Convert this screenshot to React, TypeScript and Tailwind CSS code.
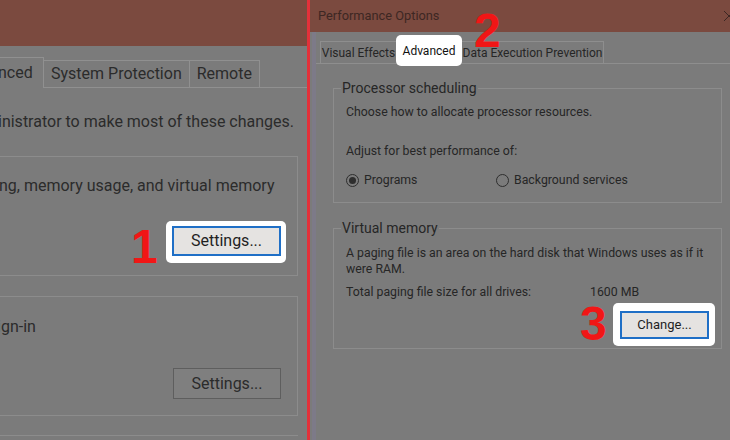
import React from 'react';

const font = { fontFamily: 'Roboto, "Noto Sans", sans-serif' };

const Mark = ({ n, className }: { n: string; className: string }) => (
    <span
        className={`absolute text-[48px] font-bold leading-none text-[#f11616] ${className}`}
        style={{ fontFamily: '"Liberation Sans", Arial, sans-serif' }}
    >
        {n}
    </span>
);

const Radio = ({ checked, label }: { checked?: boolean; label: string }) => (
    <label className="flex items-center gap-[5px]">
        <span className="flex h-[13px] w-[13px] items-center justify-center rounded-full border border-[#2e2e2e]">
            {checked && <span className="h-[7px] w-[7px] rounded-full bg-[#2e2e2e]" />}
        </span>
        {label}
    </label>
);

const LeftPanel = () => {
    return (
        <div className="flex w-[307px] shrink-0 flex-col overflow-hidden whitespace-nowrap text-[16px] text-[#2b2b2b]">
            <div className="h-[46px] bg-[#7b4a3f]" />

            {/* tabs */}
            <div className="flex h-[42px] items-end">
                <div className="-ml-[4px] flex h-[31px] w-[48px] items-center border-r border-t border-[#909090] pl-[4px]">
                    <span className="-ml-[2px]">nced</span>
                </div>
                <div className="flex flex-1 items-end border-b border-[#909090]">
                    <div className="flex h-[27px] items-center border-r border-t border-[#909090] px-[7px]">System Protection</div>
                    <div className="flex h-[27px] items-center border-r border-t border-[#909090] px-[7px]">Remote</div>
                    <div className="flex-1" />
                </div>
            </div>

            <p className="mt-[23px] -ml-[2px] leading-[22px]">inistrator to make most of these changes.</p>

            <div className="mt-[23px] mr-[9px] -ml-[4px] flex h-[120px] flex-col border border-[#8c8c8c] pr-[11px] pt-[18px]">
                <p className="pl-[2px] leading-[22px]">ng, memory usage, and virtual memory</p>
                <div className="mt-[24px] flex justify-end">
                    <div className="rounded-[5px] bg-white pb-[7px] pl-[6px] pr-[5px] pt-[5px]">
                        <button className="h-[30px] w-[109px] border-2 border-[#1f6fc6] bg-[#e5e3e1] text-[#1f1f1f]">Settings...</button>
                    </div>
                </div>
            </div>

            <div className="mt-[20px] mr-[9px] -ml-[4px] flex h-[120px] flex-col border border-[#8c8c8c] pr-[16px] pt-[19px]">
                <p className="leading-[22px]">ign-in</p>
                <div className="mt-[30px] flex justify-end">
                    <button className="h-[31px] w-[108px] border border-[#5e5e5e] bg-[#7f7f7f]">Settings...</button>
                </div>
            </div>

            <div className="mt-[19px] mr-[9px] h-px bg-[#8c8c8c]" />
        </div>
    );
};

const RightPanel = () => {
    return (
        <div className="flex min-w-0 flex-1 flex-col overflow-hidden whitespace-nowrap text-[12.3px] text-[#262626]">
            <div className="flex h-[32px] shrink-0 items-center justify-between bg-[#7b4a3f] pl-[8px] text-[12.8px] text-[#3d2723]">
                <span>Performance Options</span>
                <svg width="14" height="14" viewBox="0 0 14 14" className="-mr-[6px]">
                    <path d="M2 2 L12 12 M12 2 L2 12" stroke="#3d2723" strokeWidth="1" />
                </svg>
            </div>

            <div className="ml-[2px] flex flex-1 flex-col border-l-4 border-[#7d7a88]">
                {/* tabs */}
                <div className="flex h-[32px] shrink-0 items-end border-b border-[#8e8e8e] pl-[4px] text-[12px]">
                    <div className="flex h-[22px] w-[76px] items-center justify-center border-l border-t border-[#8e8e8e]">Visual Effects</div>
                    <div className="-mb-[3px] flex h-[31px] w-[66px] items-center justify-center rounded-[5px] bg-white text-[#111]">Advanced</div>
                    <div className="flex h-[22px] w-[142px] items-center justify-center border-r border-t border-[#8e8e8e]">Data Execution Prevention</div>
                </div>

                <fieldset className="mt-[14px] ml-[17px] mr-[8px] h-[125px] shrink-0 border border-[#8c8c8c] pl-[7px]">
                    <legend className="px-[1px] text-[14px] leading-[20px]">Processor scheduling</legend>
                    <div className="pl-[5px] leading-[16px]">
                        <p className="mt-[6px]">Choose how to allocate processor resources.</p>
                        <p className="mt-[23px]">Adjust for best performance of:</p>
                        <div className="mt-[13px] flex">
                            <div className="w-[150px]"><Radio checked label="Programs" /></div>
                            <Radio label="Background services" />
                        </div>
                    </div>
                </fieldset>

                <fieldset className="mt-[15px] ml-[17px] mr-[8px] h-[131px] shrink-0 border border-[#8c8c8c] pl-[7px] pr-[6px]">
                    <legend className="px-[1px] text-[14px] leading-[20px]">Virtual memory</legend>
                    <div className="pl-[5px] leading-[16px]">
                        <p className="mt-[7px]">A paging file is an area on the hard disk that Windows uses as if it<br />were RAM.</p>
                        <div className="mt-[7px] flex">
                            <span className="w-[244px]">Total paging file size for all drives:</span>
                            <span>1600 MB</span>
                        </div>
                        <div className="mt-[3px] flex justify-end">
                            <div className="rounded-[5px] bg-white pb-[7px] pl-[7px] pr-[6px] pt-[8px]">
                                <button className="h-[28px] w-[89px] border-2 border-[#1f6fc6] bg-[#e5e3e1] text-[13px] text-[#1f1f1f]">Change...</button>
                            </div>
                        </div>
                    </div>
                </fieldset>
            </div>
        </div>
    );
};

export default function App() {
    return (
        <div className="relative flex h-[440px] w-[730px] overflow-hidden bg-[#7b7b7b]" style={font}>
            <LeftPanel />
            <div className="w-[3px] shrink-0 bg-[#e2313a]" />
            <RightPanel />

            <Mark n="1" className="left-[131px] top-[223px]" />
            <Mark n="2" className="left-[474px] top-[7px]" />
            <Mark n="3" className="left-[580px] top-[300px]" />
        </div>
    );
}
